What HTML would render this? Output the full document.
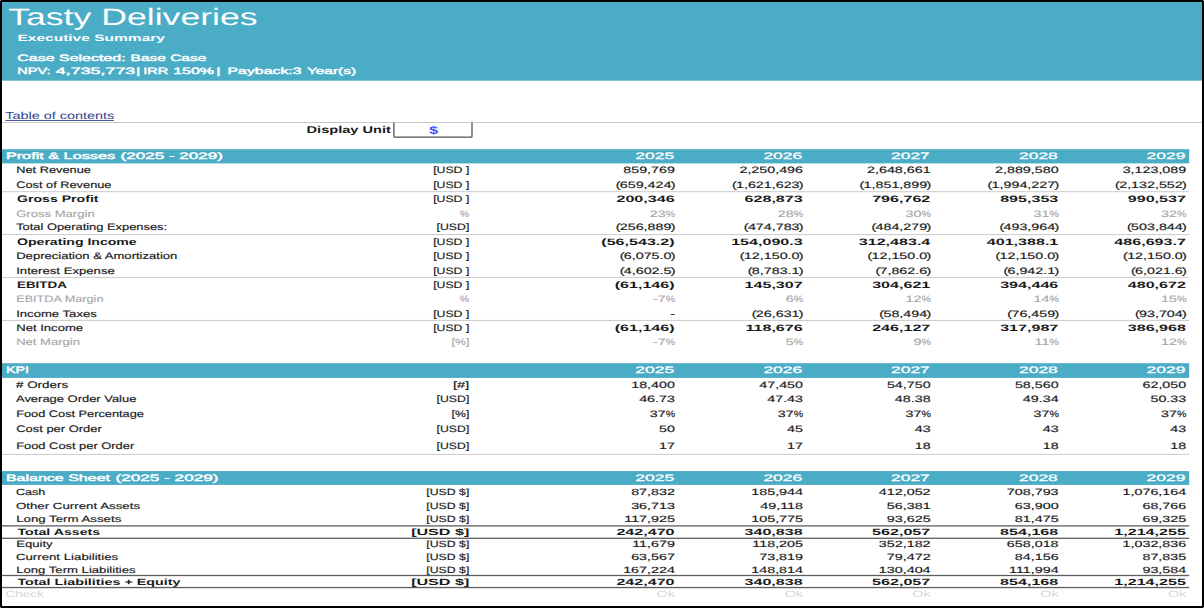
<!DOCTYPE html>
<html lang="en"><head><meta charset="utf-8"><title>Tasty Deliveries - Executive Summary</title>
<style>
html,body{margin:0;padding:0;background:#fff;}
body{width:1204px;height:608px;overflow:hidden;}
svg{display:block;font-family:"Liberation Sans",sans-serif;}
text{white-space:pre;text-rendering:geometricPrecision;}
.w{fill:#fff;} .sb{stroke:#fff;stroke-width:.42px;} .sb2{stroke:#fff;stroke-width:.26px;} .b{font-weight:bold;} .k{fill:#1a1a1a;stroke:#1a1a1a;stroke-width:.16px;} .b.k{stroke-width:0;} .g{fill:#a6a6a6;stroke:#a6a6a6;stroke-width:.12px;} .lg{fill:#d4d6dc;}
.lnk{fill:#2F3F8F;} .blue{fill:#4545ff;}
</style></head><body>
<svg width="1204" height="608" viewBox="0 0 1204 608">
<rect x="0" y="0" width="1204" height="608" fill="#000" />
<rect x="2" y="2" width="1200" height="604" fill="#fff" />
<rect x="2" y="2" width="1200" height="78.7" fill="#4BACC6" />
<rect x="0" y="0" width="1" height="1" fill="#8a8a8a" />
<rect x="1203" y="0" width="1" height="1" fill="#8a8a8a" />
<rect x="0" y="607" width="1" height="1" fill="#8a8a8a" />
<rect x="1203" y="607" width="1" height="1" fill="#8a8a8a" />
<text x="8.20" y="25.00" font-size="23.8" textLength="249.40" lengthAdjust="spacingAndGlyphs" class="w">Tasty Deliveries</text>
<text x="17.40" y="41.30" font-size="9.2" textLength="147.60" lengthAdjust="spacingAndGlyphs" class="w b">Executive Summary</text>
<text y="61.00" font-size="9.2" class="w sb"><tspan x="17.30" textLength="108.30" lengthAdjust="spacingAndGlyphs">Case Selected:</tspan><tspan> </tspan><tspan x="130.60" textLength="75.70" lengthAdjust="spacingAndGlyphs">Base Case</tspan></text>
<text y="74.00" font-size="9.2" class="w sb"><tspan x="17.30" textLength="33.30" lengthAdjust="spacingAndGlyphs">NPV:</tspan><tspan> </tspan><tspan x="55.80" textLength="79.50" lengthAdjust="spacingAndGlyphs">4,735,773</tspan><tspan x="135.90" textLength="4.40" lengthAdjust="spacingAndGlyphs">|</tspan><tspan x="143.20" textLength="25.00" lengthAdjust="spacingAndGlyphs">IRR</tspan><tspan> </tspan><tspan x="173.20" textLength="40.90" lengthAdjust="spacingAndGlyphs">150%</tspan><tspan x="216.20" textLength="4.40" lengthAdjust="spacingAndGlyphs">|</tspan><tspan> </tspan><tspan x="227.50" textLength="74.10" lengthAdjust="spacingAndGlyphs">Payback:3</tspan><tspan> </tspan><tspan x="306.90" textLength="49.20" lengthAdjust="spacingAndGlyphs">Year(s)</tspan></text>
<text x="5.20" y="118.90" font-size="10.2" textLength="109.00" lengthAdjust="spacingAndGlyphs" class="lnk">Table of contents</text>
<rect x="5.4" y="119.95" width="108.6" height="0.9" fill="#2F3F8F"/>
<rect x="2" y="122.00" width="1200" height="1" fill="#c8c8c8"/>
<text x="306.60" y="133.40" font-size="10" textLength="84.30" lengthAdjust="spacingAndGlyphs" class="b k">Display Unit</text>
<path d="M393.9 122.5 V136.2 Q393.9 137.2 394.9 137.2 H471 Q472 137.2 472 136.2 V122.5" fill="none" stroke="#505050" stroke-width="1.3"/>
<text transform="translate(433.50 134.10) scale(1.4 1)" font-size="11.2" text-anchor="middle" class="blue b">$</text>
<rect x="2" y="149.2" width="1187.2" height="14.200000000000017" fill="#4BACC6" />
<text y="159.00" font-size="9.4" class="w sb"><tspan x="5.90" textLength="109.20" lengthAdjust="spacingAndGlyphs">Profit &amp; Losses</tspan><tspan> </tspan><tspan x="120.50" textLength="102.50" lengthAdjust="spacingAndGlyphs">(2025 - 2029)</tspan></text>
<text transform="translate(674.10 159.00) scale(1.86 1)" font-size="9.4" text-anchor="end" class="w sb2">2025</text>
<text transform="translate(802.20 159.00) scale(1.86 1)" font-size="9.4" text-anchor="end" class="w sb2">2026</text>
<text transform="translate(929.80 159.00) scale(1.86 1)" font-size="9.4" text-anchor="end" class="w sb2">2027</text>
<text transform="translate(1057.80 159.00) scale(1.86 1)" font-size="9.4" text-anchor="end" class="w sb2">2028</text>
<text transform="translate(1185.40 159.00) scale(1.86 1)" font-size="9.4" text-anchor="end" class="w sb2">2029</text>
<text x="16.20" y="173.00" font-size="9.5" textLength="74.80" lengthAdjust="spacingAndGlyphs" class="k">Net Revenue</text>
<text transform="translate(469.30 173.00) scale(1.335 1)" font-size="9.2" text-anchor="end" class="k">[USD ]</text>
<text transform="translate(674.90 173.00) scale(1.555 1)" font-size="9.2" text-anchor="end" class="k">859,769</text>
<text transform="translate(803.00 173.00) scale(1.555 1)" font-size="9.2" text-anchor="end" class="k">2,250,496</text>
<text transform="translate(930.60 173.00) scale(1.555 1)" font-size="9.2" text-anchor="end" class="k">2,648,661</text>
<text transform="translate(1058.60 173.00) scale(1.555 1)" font-size="9.2" text-anchor="end" class="k">2,889,580</text>
<text transform="translate(1186.20 173.00) scale(1.555 1)" font-size="9.2" text-anchor="end" class="k">3,123,089</text>
<text x="16.20" y="188.00" font-size="9.5" textLength="95.30" lengthAdjust="spacingAndGlyphs" class="k">Cost of Revenue</text>
<text transform="translate(469.30 188.00) scale(1.335 1)" font-size="9.2" text-anchor="end" class="k">[USD ]</text>
<text transform="translate(675.50 188.00) scale(1.555 1)" font-size="9.2" text-anchor="end" class="k">(<tspan dx="-0.45">659,424</tspan><tspan dx="-0.45">)</tspan></text>
<text transform="translate(803.60 188.00) scale(1.555 1)" font-size="9.2" text-anchor="end" class="k">(<tspan dx="-0.45">1,621,623</tspan><tspan dx="-0.45">)</tspan></text>
<text transform="translate(931.20 188.00) scale(1.555 1)" font-size="9.2" text-anchor="end" class="k">(<tspan dx="-0.45">1,851,899</tspan><tspan dx="-0.45">)</tspan></text>
<text transform="translate(1059.20 188.00) scale(1.555 1)" font-size="9.2" text-anchor="end" class="k">(<tspan dx="-0.45">1,994,227</tspan><tspan dx="-0.45">)</tspan></text>
<text transform="translate(1186.80 188.00) scale(1.555 1)" font-size="9.2" text-anchor="end" class="k">(<tspan dx="-0.45">2,132,552</tspan><tspan dx="-0.45">)</tspan></text>
<text x="17.00" y="202.00" font-size="9.5" textLength="81.50" lengthAdjust="spacingAndGlyphs" class="k b">Gross Profit</text>
<text transform="translate(469.30 202.00) scale(1.335 1)" font-size="9.2" text-anchor="end" class="k">[USD ]</text>
<text transform="translate(674.60 202.00) scale(1.75 1)" font-size="9.2" text-anchor="end" class="k b">200,346</text>
<text transform="translate(802.70 202.00) scale(1.75 1)" font-size="9.2" text-anchor="end" class="k b">628,873</text>
<text transform="translate(930.30 202.00) scale(1.75 1)" font-size="9.2" text-anchor="end" class="k b">796,762</text>
<text transform="translate(1058.30 202.00) scale(1.75 1)" font-size="9.2" text-anchor="end" class="k b">895,353</text>
<text transform="translate(1185.90 202.00) scale(1.75 1)" font-size="9.2" text-anchor="end" class="k b">990,537</text>
<text x="16.20" y="217.00" font-size="9.5" textLength="78.50" lengthAdjust="spacingAndGlyphs" class="g">Gross Margin</text>
<text transform="translate(469.30 217.00) scale(1.16 1)" font-size="9.2" text-anchor="end" class="g">%</text>
<text y="217.00" font-size="9.2" class="g"><tspan x="649.79" textLength="15.91" lengthAdjust="spacingAndGlyphs">23</tspan><tspan x="665.70" textLength="9.50" lengthAdjust="spacingAndGlyphs">%</tspan></text>
<text y="217.00" font-size="9.2" class="g"><tspan x="777.89" textLength="15.91" lengthAdjust="spacingAndGlyphs">28</tspan><tspan x="793.80" textLength="9.50" lengthAdjust="spacingAndGlyphs">%</tspan></text>
<text y="217.00" font-size="9.2" class="g"><tspan x="905.49" textLength="15.91" lengthAdjust="spacingAndGlyphs">30</tspan><tspan x="921.40" textLength="9.50" lengthAdjust="spacingAndGlyphs">%</tspan></text>
<text y="217.00" font-size="9.2" class="g"><tspan x="1033.49" textLength="15.91" lengthAdjust="spacingAndGlyphs">31</tspan><tspan x="1049.40" textLength="9.50" lengthAdjust="spacingAndGlyphs">%</tspan></text>
<text y="217.00" font-size="9.2" class="g"><tspan x="1161.09" textLength="15.91" lengthAdjust="spacingAndGlyphs">32</tspan><tspan x="1177.00" textLength="9.50" lengthAdjust="spacingAndGlyphs">%</tspan></text>
<text x="16.20" y="230.00" font-size="9.5" textLength="150.90" lengthAdjust="spacingAndGlyphs" class="k">Total Operating Expenses:</text>
<text transform="translate(469.30 230.00) scale(1.335 1)" font-size="9.2" text-anchor="end" class="k">[USD]</text>
<text transform="translate(675.50 230.00) scale(1.555 1)" font-size="9.2" text-anchor="end" class="k">(<tspan dx="-0.45">256,889</tspan><tspan dx="-0.45">)</tspan></text>
<text transform="translate(803.60 230.00) scale(1.555 1)" font-size="9.2" text-anchor="end" class="k">(<tspan dx="-0.45">474,783</tspan><tspan dx="-0.45">)</tspan></text>
<text transform="translate(931.20 230.00) scale(1.555 1)" font-size="9.2" text-anchor="end" class="k">(<tspan dx="-0.45">484,279</tspan><tspan dx="-0.45">)</tspan></text>
<text transform="translate(1059.20 230.00) scale(1.555 1)" font-size="9.2" text-anchor="end" class="k">(<tspan dx="-0.45">493,964</tspan><tspan dx="-0.45">)</tspan></text>
<text transform="translate(1186.80 230.00) scale(1.555 1)" font-size="9.2" text-anchor="end" class="k">(<tspan dx="-0.45">503,844</tspan><tspan dx="-0.45">)</tspan></text>
<text x="17.00" y="245.00" font-size="9.5" textLength="119.70" lengthAdjust="spacingAndGlyphs" class="k b">Operating Income</text>
<text transform="translate(469.30 245.00) scale(1.335 1)" font-size="9.2" text-anchor="end" class="k">[USD ]</text>
<text transform="translate(674.60 245.00) scale(1.75 1)" font-size="9.2" text-anchor="end" class="k b">(56,543.2)</text>
<text transform="translate(802.70 245.00) scale(1.75 1)" font-size="9.2" text-anchor="end" class="k b">154,090.3</text>
<text transform="translate(930.30 245.00) scale(1.75 1)" font-size="9.2" text-anchor="end" class="k b">312,483.4</text>
<text transform="translate(1058.30 245.00) scale(1.75 1)" font-size="9.2" text-anchor="end" class="k b">401,388.1</text>
<text transform="translate(1185.90 245.00) scale(1.75 1)" font-size="9.2" text-anchor="end" class="k b">486,693.7</text>
<text x="16.20" y="259.00" font-size="9.5" textLength="161.20" lengthAdjust="spacingAndGlyphs" class="k">Depreciation &amp; Amortization</text>
<text transform="translate(469.30 259.00) scale(1.335 1)" font-size="9.2" text-anchor="end" class="k">[USD ]</text>
<text transform="translate(675.50 259.00) scale(1.555 1)" font-size="9.2" text-anchor="end" class="k">(<tspan dx="-0.45">6,075.0</tspan><tspan dx="-0.45">)</tspan></text>
<text transform="translate(803.60 259.00) scale(1.555 1)" font-size="9.2" text-anchor="end" class="k">(<tspan dx="-0.45">12,150.0</tspan><tspan dx="-0.45">)</tspan></text>
<text transform="translate(931.20 259.00) scale(1.555 1)" font-size="9.2" text-anchor="end" class="k">(<tspan dx="-0.45">12,150.0</tspan><tspan dx="-0.45">)</tspan></text>
<text transform="translate(1059.20 259.00) scale(1.555 1)" font-size="9.2" text-anchor="end" class="k">(<tspan dx="-0.45">12,150.0</tspan><tspan dx="-0.45">)</tspan></text>
<text transform="translate(1186.80 259.00) scale(1.555 1)" font-size="9.2" text-anchor="end" class="k">(<tspan dx="-0.45">12,150.0</tspan><tspan dx="-0.45">)</tspan></text>
<text x="16.20" y="274.00" font-size="9.5" textLength="98.60" lengthAdjust="spacingAndGlyphs" class="k">Interest Expense</text>
<text transform="translate(469.30 274.00) scale(1.335 1)" font-size="9.2" text-anchor="end" class="k">[USD ]</text>
<text transform="translate(675.50 274.00) scale(1.555 1)" font-size="9.2" text-anchor="end" class="k">(<tspan dx="-0.45">4,602.5</tspan><tspan dx="-0.45">)</tspan></text>
<text transform="translate(803.60 274.00) scale(1.555 1)" font-size="9.2" text-anchor="end" class="k">(<tspan dx="-0.45">8,783.1</tspan><tspan dx="-0.45">)</tspan></text>
<text transform="translate(931.20 274.00) scale(1.555 1)" font-size="9.2" text-anchor="end" class="k">(<tspan dx="-0.45">7,862.6</tspan><tspan dx="-0.45">)</tspan></text>
<text transform="translate(1059.20 274.00) scale(1.555 1)" font-size="9.2" text-anchor="end" class="k">(<tspan dx="-0.45">6,942.1</tspan><tspan dx="-0.45">)</tspan></text>
<text transform="translate(1186.80 274.00) scale(1.555 1)" font-size="9.2" text-anchor="end" class="k">(<tspan dx="-0.45">6,021.6</tspan><tspan dx="-0.45">)</tspan></text>
<text x="17.00" y="288.00" font-size="9.5" textLength="49.90" lengthAdjust="spacingAndGlyphs" class="k b">EBITDA</text>
<text transform="translate(469.30 288.00) scale(1.335 1)" font-size="9.2" text-anchor="end" class="k">[USD ]</text>
<text transform="translate(674.60 288.00) scale(1.75 1)" font-size="9.2" text-anchor="end" class="k b">(61,146)</text>
<text transform="translate(802.70 288.00) scale(1.75 1)" font-size="9.2" text-anchor="end" class="k b">145,307</text>
<text transform="translate(930.30 288.00) scale(1.75 1)" font-size="9.2" text-anchor="end" class="k b">304,621</text>
<text transform="translate(1058.30 288.00) scale(1.75 1)" font-size="9.2" text-anchor="end" class="k b">394,446</text>
<text transform="translate(1185.90 288.00) scale(1.75 1)" font-size="9.2" text-anchor="end" class="k b">480,672</text>
<text x="16.20" y="302.00" font-size="9.5" textLength="87.30" lengthAdjust="spacingAndGlyphs" class="g">EBITDA Margin</text>
<text transform="translate(469.30 302.00) scale(1.16 1)" font-size="9.2" text-anchor="end" class="g">%</text>
<text y="302.00" font-size="9.2" class="g"><tspan x="652.98" textLength="12.72" lengthAdjust="spacingAndGlyphs">-7</tspan><tspan x="665.70" textLength="9.50" lengthAdjust="spacingAndGlyphs">%</tspan></text>
<text y="302.00" font-size="9.2" class="g"><tspan x="785.84" textLength="7.96" lengthAdjust="spacingAndGlyphs">6</tspan><tspan x="793.80" textLength="9.50" lengthAdjust="spacingAndGlyphs">%</tspan></text>
<text y="302.00" font-size="9.2" class="g"><tspan x="905.49" textLength="15.91" lengthAdjust="spacingAndGlyphs">12</tspan><tspan x="921.40" textLength="9.50" lengthAdjust="spacingAndGlyphs">%</tspan></text>
<text y="302.00" font-size="9.2" class="g"><tspan x="1033.49" textLength="15.91" lengthAdjust="spacingAndGlyphs">14</tspan><tspan x="1049.40" textLength="9.50" lengthAdjust="spacingAndGlyphs">%</tspan></text>
<text y="302.00" font-size="9.2" class="g"><tspan x="1161.09" textLength="15.91" lengthAdjust="spacingAndGlyphs">15</tspan><tspan x="1177.00" textLength="9.50" lengthAdjust="spacingAndGlyphs">%</tspan></text>
<text x="16.20" y="317.00" font-size="9.5" textLength="80.60" lengthAdjust="spacingAndGlyphs" class="k">Income Taxes</text>
<text transform="translate(469.30 317.00) scale(1.335 1)" font-size="9.2" text-anchor="end" class="k">[USD ]</text>
<text transform="translate(674.90 317.00) scale(1.555 1)" font-size="9.2" text-anchor="end" class="k">-</text>
<text transform="translate(803.60 317.00) scale(1.555 1)" font-size="9.2" text-anchor="end" class="k">(<tspan dx="-0.45">26,631</tspan><tspan dx="-0.45">)</tspan></text>
<text transform="translate(931.20 317.00) scale(1.555 1)" font-size="9.2" text-anchor="end" class="k">(<tspan dx="-0.45">58,494</tspan><tspan dx="-0.45">)</tspan></text>
<text transform="translate(1059.20 317.00) scale(1.555 1)" font-size="9.2" text-anchor="end" class="k">(<tspan dx="-0.45">76,459</tspan><tspan dx="-0.45">)</tspan></text>
<text transform="translate(1186.80 317.00) scale(1.555 1)" font-size="9.2" text-anchor="end" class="k">(<tspan dx="-0.45">93,704</tspan><tspan dx="-0.45">)</tspan></text>
<text x="16.20" y="331.00" font-size="9.5" textLength="66.90" lengthAdjust="spacingAndGlyphs" class="k">Net Income</text>
<text transform="translate(469.30 331.00) scale(1.335 1)" font-size="9.2" text-anchor="end" class="k">[USD ]</text>
<text transform="translate(674.60 331.00) scale(1.75 1)" font-size="9.2" text-anchor="end" class="k b">(61,146)</text>
<text transform="translate(802.70 331.00) scale(1.75 1)" font-size="9.2" text-anchor="end" class="k b">118,676</text>
<text transform="translate(930.30 331.00) scale(1.75 1)" font-size="9.2" text-anchor="end" class="k b">246,127</text>
<text transform="translate(1058.30 331.00) scale(1.75 1)" font-size="9.2" text-anchor="end" class="k b">317,987</text>
<text transform="translate(1185.90 331.00) scale(1.75 1)" font-size="9.2" text-anchor="end" class="k b">386,968</text>
<text x="16.20" y="345.00" font-size="9.5" textLength="63.70" lengthAdjust="spacingAndGlyphs" class="g">Net Margin</text>
<text transform="translate(469.30 345.00) scale(1.335 1)" font-size="9.2" text-anchor="end" class="g">[%]</text>
<text y="345.00" font-size="9.2" class="g"><tspan x="652.98" textLength="12.72" lengthAdjust="spacingAndGlyphs">-7</tspan><tspan x="665.70" textLength="9.50" lengthAdjust="spacingAndGlyphs">%</tspan></text>
<text y="345.00" font-size="9.2" class="g"><tspan x="785.84" textLength="7.96" lengthAdjust="spacingAndGlyphs">5</tspan><tspan x="793.80" textLength="9.50" lengthAdjust="spacingAndGlyphs">%</tspan></text>
<text y="345.00" font-size="9.2" class="g"><tspan x="913.44" textLength="7.96" lengthAdjust="spacingAndGlyphs">9</tspan><tspan x="921.40" textLength="9.50" lengthAdjust="spacingAndGlyphs">%</tspan></text>
<text y="345.00" font-size="9.2" class="g"><tspan x="1034.55" textLength="14.85" lengthAdjust="spacingAndGlyphs">11</tspan><tspan x="1049.40" textLength="9.50" lengthAdjust="spacingAndGlyphs">%</tspan></text>
<text y="345.00" font-size="9.2" class="g"><tspan x="1161.09" textLength="15.91" lengthAdjust="spacingAndGlyphs">12</tspan><tspan x="1177.00" textLength="9.50" lengthAdjust="spacingAndGlyphs">%</tspan></text>
<rect x="2" y="191.20" width="1187.2" height="1" fill="#cacaca"/>
<rect x="2" y="234.10" width="1187.2" height="1" fill="#cacaca"/>
<rect x="2" y="276.90" width="1187.2" height="1" fill="#cacaca"/>
<rect x="2" y="319.90" width="1187.2" height="1" fill="#cacaca"/>
<rect x="2" y="363.2" width="1187.2" height="14.699999999999989" fill="#4BACC6" />
<text y="373.00" font-size="9.4" class="w sb"><tspan x="5.90" textLength="23.10" lengthAdjust="spacingAndGlyphs">KPI</tspan></text>
<text transform="translate(674.10 373.00) scale(1.86 1)" font-size="9.4" text-anchor="end" class="w sb2">2025</text>
<text transform="translate(802.20 373.00) scale(1.86 1)" font-size="9.4" text-anchor="end" class="w sb2">2026</text>
<text transform="translate(929.80 373.00) scale(1.86 1)" font-size="9.4" text-anchor="end" class="w sb2">2027</text>
<text transform="translate(1057.80 373.00) scale(1.86 1)" font-size="9.4" text-anchor="end" class="w sb2">2028</text>
<text transform="translate(1185.40 373.00) scale(1.86 1)" font-size="9.4" text-anchor="end" class="w sb2">2029</text>
<text x="16.00" y="388.00" font-size="9.5" textLength="52.10" lengthAdjust="spacingAndGlyphs" class="k"># Orders</text>
<text transform="translate(469.30 388.00) scale(1.59 1)" font-size="9.2" text-anchor="end" class="k">[#]</text>
<text transform="translate(674.90 388.00) scale(1.555 1)" font-size="9.2" text-anchor="end" class="k">18,400</text>
<text transform="translate(803.00 388.00) scale(1.555 1)" font-size="9.2" text-anchor="end" class="k">47,450</text>
<text transform="translate(930.60 388.00) scale(1.555 1)" font-size="9.2" text-anchor="end" class="k">54,750</text>
<text transform="translate(1058.60 388.00) scale(1.555 1)" font-size="9.2" text-anchor="end" class="k">58,560</text>
<text transform="translate(1186.20 388.00) scale(1.555 1)" font-size="9.2" text-anchor="end" class="k">62,050</text>
<text x="16.00" y="402.00" font-size="9.5" textLength="120.40" lengthAdjust="spacingAndGlyphs" class="k">Average Order Value</text>
<text transform="translate(469.30 402.00) scale(1.335 1)" font-size="9.2" text-anchor="end" class="k">[USD]</text>
<text transform="translate(674.90 402.00) scale(1.555 1)" font-size="9.2" text-anchor="end" class="k">46.73</text>
<text transform="translate(803.00 402.00) scale(1.555 1)" font-size="9.2" text-anchor="end" class="k">47.43</text>
<text transform="translate(930.60 402.00) scale(1.555 1)" font-size="9.2" text-anchor="end" class="k">48.38</text>
<text transform="translate(1058.60 402.00) scale(1.555 1)" font-size="9.2" text-anchor="end" class="k">49.34</text>
<text transform="translate(1186.20 402.00) scale(1.555 1)" font-size="9.2" text-anchor="end" class="k">50.33</text>
<text x="16.20" y="417.00" font-size="9.5" textLength="127.70" lengthAdjust="spacingAndGlyphs" class="k">Food Cost Percentage</text>
<text transform="translate(469.30 417.00) scale(1.335 1)" font-size="9.2" text-anchor="end" class="k">[%]</text>
<text y="417.00" font-size="9.2" class="k"><tspan x="649.79" textLength="15.91" lengthAdjust="spacingAndGlyphs">37</tspan><tspan x="665.70" textLength="9.50" lengthAdjust="spacingAndGlyphs">%</tspan></text>
<text y="417.00" font-size="9.2" class="k"><tspan x="777.89" textLength="15.91" lengthAdjust="spacingAndGlyphs">37</tspan><tspan x="793.80" textLength="9.50" lengthAdjust="spacingAndGlyphs">%</tspan></text>
<text y="417.00" font-size="9.2" class="k"><tspan x="905.49" textLength="15.91" lengthAdjust="spacingAndGlyphs">37</tspan><tspan x="921.40" textLength="9.50" lengthAdjust="spacingAndGlyphs">%</tspan></text>
<text y="417.00" font-size="9.2" class="k"><tspan x="1033.49" textLength="15.91" lengthAdjust="spacingAndGlyphs">37</tspan><tspan x="1049.40" textLength="9.50" lengthAdjust="spacingAndGlyphs">%</tspan></text>
<text y="417.00" font-size="9.2" class="k"><tspan x="1161.09" textLength="15.91" lengthAdjust="spacingAndGlyphs">37</tspan><tspan x="1177.00" textLength="9.50" lengthAdjust="spacingAndGlyphs">%</tspan></text>
<text x="16.20" y="432.00" font-size="9.5" textLength="85.60" lengthAdjust="spacingAndGlyphs" class="k">Cost per Order</text>
<text transform="translate(469.30 432.00) scale(1.335 1)" font-size="9.2" text-anchor="end" class="k">[USD]</text>
<text transform="translate(674.90 432.00) scale(1.555 1)" font-size="9.2" text-anchor="end" class="k">50</text>
<text transform="translate(803.00 432.00) scale(1.555 1)" font-size="9.2" text-anchor="end" class="k">45</text>
<text transform="translate(930.60 432.00) scale(1.555 1)" font-size="9.2" text-anchor="end" class="k">43</text>
<text transform="translate(1058.60 432.00) scale(1.555 1)" font-size="9.2" text-anchor="end" class="k">43</text>
<text transform="translate(1186.20 432.00) scale(1.555 1)" font-size="9.2" text-anchor="end" class="k">43</text>
<text x="16.20" y="449.00" font-size="9.5" textLength="118.00" lengthAdjust="spacingAndGlyphs" class="k">Food Cost per Order</text>
<text transform="translate(469.30 449.00) scale(1.335 1)" font-size="9.2" text-anchor="end" class="k">[USD]</text>
<text transform="translate(674.90 449.00) scale(1.555 1)" font-size="9.2" text-anchor="end" class="k">17</text>
<text transform="translate(803.00 449.00) scale(1.555 1)" font-size="9.2" text-anchor="end" class="k">17</text>
<text transform="translate(930.60 449.00) scale(1.555 1)" font-size="9.2" text-anchor="end" class="k">18</text>
<text transform="translate(1058.60 449.00) scale(1.555 1)" font-size="9.2" text-anchor="end" class="k">18</text>
<text transform="translate(1186.20 449.00) scale(1.555 1)" font-size="9.2" text-anchor="end" class="k">18</text>
<rect x="2" y="453.90" width="1187.2" height="1" fill="#cacaca"/>
<rect x="2" y="471.1" width="1187.2" height="13.799999999999955" fill="#4BACC6" />
<text y="481.00" font-size="9.4" class="w sb"><tspan x="5.90" textLength="104.10" lengthAdjust="spacingAndGlyphs">Balance Sheet</tspan><tspan> </tspan><tspan x="115.50" textLength="103.00" lengthAdjust="spacingAndGlyphs">(2025 - 2029)</tspan></text>
<text transform="translate(674.10 481.00) scale(1.86 1)" font-size="9.4" text-anchor="end" class="w sb2">2025</text>
<text transform="translate(802.20 481.00) scale(1.86 1)" font-size="9.4" text-anchor="end" class="w sb2">2026</text>
<text transform="translate(929.80 481.00) scale(1.86 1)" font-size="9.4" text-anchor="end" class="w sb2">2027</text>
<text transform="translate(1057.80 481.00) scale(1.86 1)" font-size="9.4" text-anchor="end" class="w sb2">2028</text>
<text transform="translate(1185.40 481.00) scale(1.86 1)" font-size="9.4" text-anchor="end" class="w sb2">2029</text>
<text x="15.90" y="495.00" font-size="9.0" textLength="29.50" lengthAdjust="spacingAndGlyphs" class="k">Cash</text>
<text transform="translate(469.30 495.00) scale(1.3646666666666665 1)" font-size="9.0" text-anchor="end" class="k">[USD $]</text>
<text transform="translate(674.90 495.00) scale(1.5895555555555554 1)" font-size="9.0" text-anchor="end" class="k">87,832</text>
<text transform="translate(803.00 495.00) scale(1.5895555555555554 1)" font-size="9.0" text-anchor="end" class="k">185,944</text>
<text transform="translate(930.60 495.00) scale(1.5895555555555554 1)" font-size="9.0" text-anchor="end" class="k">412,052</text>
<text transform="translate(1058.60 495.00) scale(1.5895555555555554 1)" font-size="9.0" text-anchor="end" class="k">708,793</text>
<text transform="translate(1186.20 495.00) scale(1.5895555555555554 1)" font-size="9.0" text-anchor="end" class="k">1,076,164</text>
<text x="15.90" y="509.00" font-size="9.0" textLength="124.20" lengthAdjust="spacingAndGlyphs" class="k">Other Current Assets</text>
<text transform="translate(469.30 509.00) scale(1.3646666666666665 1)" font-size="9.0" text-anchor="end" class="k">[USD $]</text>
<text transform="translate(674.90 509.00) scale(1.5895555555555554 1)" font-size="9.0" text-anchor="end" class="k">36,713</text>
<text transform="translate(803.00 509.00) scale(1.5895555555555554 1)" font-size="9.0" text-anchor="end" class="k">49,118</text>
<text transform="translate(930.60 509.00) scale(1.5895555555555554 1)" font-size="9.0" text-anchor="end" class="k">56,381</text>
<text transform="translate(1058.60 509.00) scale(1.5895555555555554 1)" font-size="9.0" text-anchor="end" class="k">63,900</text>
<text transform="translate(1186.20 509.00) scale(1.5895555555555554 1)" font-size="9.0" text-anchor="end" class="k">68,766</text>
<text x="16.20" y="522.00" font-size="9.0" textLength="105.10" lengthAdjust="spacingAndGlyphs" class="k">Long Term Assets</text>
<text transform="translate(469.30 522.00) scale(1.3646666666666665 1)" font-size="9.0" text-anchor="end" class="k">[USD $]</text>
<text transform="translate(674.90 522.00) scale(1.5895555555555554 1)" font-size="9.0" text-anchor="end" class="k">117,925</text>
<text transform="translate(803.00 522.00) scale(1.5895555555555554 1)" font-size="9.0" text-anchor="end" class="k">105,775</text>
<text transform="translate(930.60 522.00) scale(1.5895555555555554 1)" font-size="9.0" text-anchor="end" class="k">93,625</text>
<text transform="translate(1058.60 522.00) scale(1.5895555555555554 1)" font-size="9.0" text-anchor="end" class="k">81,475</text>
<text transform="translate(1186.20 522.00) scale(1.5895555555555554 1)" font-size="9.0" text-anchor="end" class="k">69,325</text>
<text x="17.40" y="535.00" font-size="9.0" textLength="82.80" lengthAdjust="spacingAndGlyphs" class="k b">Total Assets</text>
<text transform="translate(469.30 535.00) scale(1.7888888888888888 1)" font-size="9.0" text-anchor="end" class="k b">[USD $]</text>
<text transform="translate(674.60 535.00) scale(1.7888888888888888 1)" font-size="9.0" text-anchor="end" class="k b">242,470</text>
<text transform="translate(802.70 535.00) scale(1.7888888888888888 1)" font-size="9.0" text-anchor="end" class="k b">340,838</text>
<text transform="translate(930.30 535.00) scale(1.7888888888888888 1)" font-size="9.0" text-anchor="end" class="k b">562,057</text>
<text transform="translate(1058.30 535.00) scale(1.7888888888888888 1)" font-size="9.0" text-anchor="end" class="k b">854,168</text>
<text transform="translate(1185.90 535.00) scale(1.7888888888888888 1)" font-size="9.0" text-anchor="end" class="k b">1,214,255</text>
<text x="16.20" y="547.00" font-size="9.0" textLength="36.50" lengthAdjust="spacingAndGlyphs" class="k">Equity</text>
<text transform="translate(469.30 547.00) scale(1.3646666666666665 1)" font-size="9.0" text-anchor="end" class="k">[USD $]</text>
<text transform="translate(674.90 547.00) scale(1.5895555555555554 1)" font-size="9.0" text-anchor="end" class="k">11,679</text>
<text transform="translate(803.00 547.00) scale(1.5895555555555554 1)" font-size="9.0" text-anchor="end" class="k">118,205</text>
<text transform="translate(930.60 547.00) scale(1.5895555555555554 1)" font-size="9.0" text-anchor="end" class="k">352,182</text>
<text transform="translate(1058.60 547.00) scale(1.5895555555555554 1)" font-size="9.0" text-anchor="end" class="k">658,018</text>
<text transform="translate(1186.20 547.00) scale(1.5895555555555554 1)" font-size="9.0" text-anchor="end" class="k">1,032,836</text>
<text x="15.90" y="560.00" font-size="9.0" textLength="102.30" lengthAdjust="spacingAndGlyphs" class="k">Current Liabilities</text>
<text transform="translate(469.30 560.00) scale(1.3646666666666665 1)" font-size="9.0" text-anchor="end" class="k">[USD $]</text>
<text transform="translate(674.90 560.00) scale(1.5895555555555554 1)" font-size="9.0" text-anchor="end" class="k">63,567</text>
<text transform="translate(803.00 560.00) scale(1.5895555555555554 1)" font-size="9.0" text-anchor="end" class="k">73,819</text>
<text transform="translate(930.60 560.00) scale(1.5895555555555554 1)" font-size="9.0" text-anchor="end" class="k">79,472</text>
<text transform="translate(1058.60 560.00) scale(1.5895555555555554 1)" font-size="9.0" text-anchor="end" class="k">84,156</text>
<text transform="translate(1186.20 560.00) scale(1.5895555555555554 1)" font-size="9.0" text-anchor="end" class="k">87,835</text>
<text x="16.20" y="573.00" font-size="9.0" textLength="119.40" lengthAdjust="spacingAndGlyphs" class="k">Long Term Liabilities</text>
<text transform="translate(469.30 573.00) scale(1.3646666666666665 1)" font-size="9.0" text-anchor="end" class="k">[USD $]</text>
<text transform="translate(674.90 573.00) scale(1.5895555555555554 1)" font-size="9.0" text-anchor="end" class="k">167,224</text>
<text transform="translate(803.00 573.00) scale(1.5895555555555554 1)" font-size="9.0" text-anchor="end" class="k">148,814</text>
<text transform="translate(930.60 573.00) scale(1.5895555555555554 1)" font-size="9.0" text-anchor="end" class="k">130,404</text>
<text transform="translate(1058.60 573.00) scale(1.5895555555555554 1)" font-size="9.0" text-anchor="end" class="k">111,994</text>
<text transform="translate(1186.20 573.00) scale(1.5895555555555554 1)" font-size="9.0" text-anchor="end" class="k">93,584</text>
<text x="17.40" y="585.00" font-size="9.0" textLength="163.10" lengthAdjust="spacingAndGlyphs" class="k b">Total Liabilities + Equity</text>
<text transform="translate(469.30 585.00) scale(1.7888888888888888 1)" font-size="9.0" text-anchor="end" class="k b">[USD $]</text>
<text transform="translate(674.60 585.00) scale(1.7888888888888888 1)" font-size="9.0" text-anchor="end" class="k b">242,470</text>
<text transform="translate(802.70 585.00) scale(1.7888888888888888 1)" font-size="9.0" text-anchor="end" class="k b">340,838</text>
<text transform="translate(930.30 585.00) scale(1.7888888888888888 1)" font-size="9.0" text-anchor="end" class="k b">562,057</text>
<text transform="translate(1058.30 585.00) scale(1.7888888888888888 1)" font-size="9.0" text-anchor="end" class="k b">854,168</text>
<text transform="translate(1185.90 585.00) scale(1.7888888888888888 1)" font-size="9.0" text-anchor="end" class="k b">1,214,255</text>
<rect x="2" y="525.25" width="1187.2" height="1.3" fill="#5e5e5e"/>
<rect x="2" y="537.65" width="1187.2" height="1.3" fill="#5e5e5e"/>
<rect x="2" y="574.85" width="1187.2" height="1.3" fill="#5e5e5e"/>
<rect x="2" y="586.90" width="1187.2" height="1.3" fill="#5e5e5e"/>
<text x="5.40" y="597.00" font-size="9.0" textLength="38.50" lengthAdjust="spacingAndGlyphs" class="lg">Check</text>
<text transform="translate(674.90 597.00) scale(1.5895555555555554 1)" font-size="9.0" text-anchor="end" class="lg">Ok</text>
<text transform="translate(803.00 597.00) scale(1.5895555555555554 1)" font-size="9.0" text-anchor="end" class="lg">Ok</text>
<text transform="translate(930.60 597.00) scale(1.5895555555555554 1)" font-size="9.0" text-anchor="end" class="lg">Ok</text>
<text transform="translate(1058.60 597.00) scale(1.5895555555555554 1)" font-size="9.0" text-anchor="end" class="lg">Ok</text>
<text transform="translate(1186.20 597.00) scale(1.5895555555555554 1)" font-size="9.0" text-anchor="end" class="lg">Ok</text>
</svg>
</body></html>
